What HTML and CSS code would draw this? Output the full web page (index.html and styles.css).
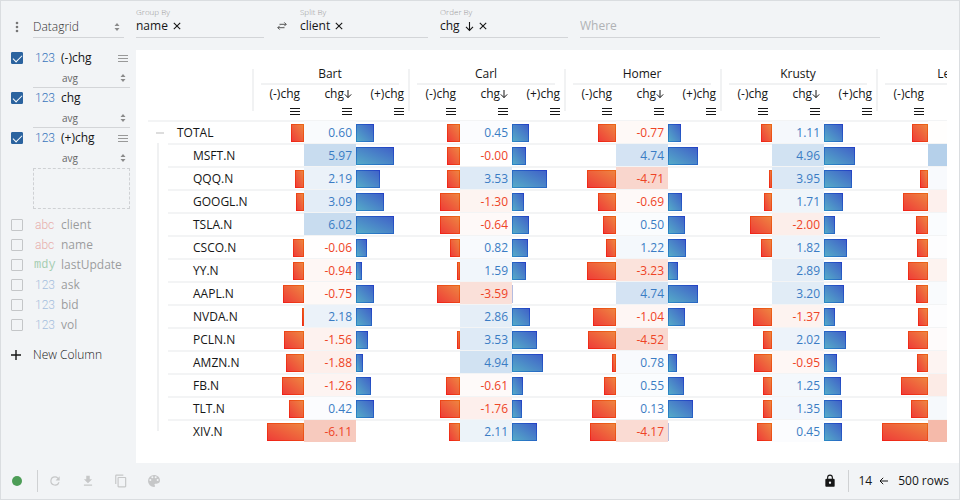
FILE: index.html
```html
<!DOCTYPE html>
<html lang="en">
<head>
<meta charset="utf-8">
<title>Datagrid</title>
<link rel="stylesheet" href="styles.css">
</head>
<body>
<svg class="defs" aria-hidden="true">
  <symbol id="updown" viewBox="0 0 6 10"><path d="M3 1 5.5 4h-5zM3 9 .5 6h5z"/></symbol>
  <symbol id="bars" viewBox="0 0 10 8"><path d="M0 1.5h10M0 4.5h10M0 7.5h10" stroke="currentColor" stroke-width="1"/></symbol>
  <symbol id="cross" viewBox="0 0 8 8"><path d="M.8.8l6.4 6.4M7.2.8.8 7.2" stroke="currentColor" stroke-width="1.1"/></symbol>
  <symbol id="down" viewBox="0 0 8 10"><path d="M4 1v7.6M.8 5.4 4 8.6l3.2-3.2" fill="none" stroke="currentColor" stroke-width="1"/></symbol>
</svg>
<div class="viewer">
  <header class="topbar">
    <div class="plugin">
      <button class="icon-button dots" aria-label="Menu"><svg width="4" height="12" viewBox="0 0 4 12"><circle cx="2" cy="2" r="1.3"/><circle cx="2" cy="6" r="1.3"/><circle cx="2" cy="10" r="1.3"/></svg></button>
      <div class="pick pick-plugin">
        <select aria-label="View type"><option>Datagrid</option></select>
        <svg width="6" height="10"><use href="#updown"/></svg>
      </div>
    </div>
    <div class="field"><span class="caption">Group By</span><div class="pill">name <button class="icon-button" aria-label="Remove name"><svg width="8" height="8"><use href="#cross"/></svg></button></div></div>
    <button class="icon-button swap" aria-label="Transpose"><svg width="10" height="8" viewBox="0 0 10 8" fill="none" stroke="currentColor"><path d="M2.5 2.3h6.7M7.3.4l1.9 1.9-1.9 1.9M7.5 5.7H.8M2.7 3.8.8 5.7l1.9 1.9"/></svg></button>
    <div class="field"><span class="caption">Split By</span><div class="pill">client <button class="icon-button" aria-label="Remove client"><svg width="8" height="8"><use href="#cross"/></svg></button></div></div>
    <div class="field"><span class="caption">Order By</span><div class="pill">chg <button class="icon-button" aria-label="Sort direction"><svg width="9" height="11"><use href="#down"/></svg></button> <button class="icon-button" aria-label="Remove chg"><svg width="8" height="8"><use href="#cross"/></svg></button></div></div>
    <input class="where" type="text" placeholder="Where" aria-label="Where">
  </header>

  <aside class="sidebar">
    <div class="active-column">
      <input type="checkbox" id="c-neg" checked><label for="c-neg"><span class="type number">123</span>(-)chg</label>
      <button class="icon-button drag" aria-label="Edit (-)chg"><svg width="10" height="8"><use href="#bars"/></svg></button>
      <div class="pick pick-agg"><select aria-label="(-)chg aggregate"><option>avg</option></select><svg width="6" height="10"><use href="#updown"/></svg></div>
    </div>
    <div class="active-column">
      <input type="checkbox" id="c-chg" checked><label for="c-chg"><span class="type number">123</span>chg</label>
      <div class="pick pick-agg"><select aria-label="chg aggregate"><option>avg</option></select><svg width="6" height="10"><use href="#updown"/></svg></div>
    </div>
    <div class="active-column">
      <input type="checkbox" id="c-pos" checked><label for="c-pos"><span class="type number">123</span>(+)chg</label>
      <button class="icon-button drag" aria-label="Edit (+)chg"><svg width="10" height="8"><use href="#bars"/></svg></button>
      <div class="pick pick-agg last"><select aria-label="(+)chg aggregate"><option>avg</option></select><svg width="6" height="10"><use href="#updown"/></svg></div>
    </div>
    <div class="dropzone"></div>
    <div class="inactive">
      <div class="column"><input type="checkbox" id="c-client"><label for="c-client"><span class="type string">abc</span>client</label></div>
      <div class="column"><input type="checkbox" id="c-name"><label for="c-name"><span class="type string">abc</span>name</label></div>
      <div class="column"><input type="checkbox" id="c-last"><label for="c-last"><span class="type date">mdy</span>lastUpdate</label></div>
      <div class="column"><input type="checkbox" id="c-ask"><label for="c-ask"><span class="type number">123</span>ask</label></div>
      <div class="column"><input type="checkbox" id="c-bid"><label for="c-bid"><span class="type number">123</span>bid</label></div>
      <div class="column"><input type="checkbox" id="c-vol"><label for="c-vol"><span class="type number">123</span>vol</label></div>
    </div>
    <button class="new-column"><svg width="10" height="10" viewBox="0 0 10 10"><path d="M5 0v10M0 5h10" stroke="currentColor" stroke-width="1.4"/></svg>New Column</button>
  </aside>

  <main class="panel">
    <div class="scroller">
      <table>
        <colgroup><col class="tree-col"><col span="15" class="value-col"></colgroup>
        <thead></thead>
        <tbody></tbody>
      </table>
    </div>
  </main>

  <footer class="status">
    <span class="light"></span>
    <span class="divider"></span>
    <button class="icon-button" aria-label="Reset"><svg width="14" height="14" viewBox="0 0 24 24"><path d="M17.65 6.35A7.96 7.96 0 0 0 12 4a8 8 0 1 0 7.73 10h-2.08A6 6 0 1 1 12 6c1.66 0 3.14.69 4.22 1.78L13 11h7V4z"/></svg></button>
    <button class="icon-button" aria-label="Export"><svg width="14" height="14" viewBox="0 0 24 24"><path d="M19 9h-4V3H9v6H5l7 7zM5 18v2h14v-2z"/></svg></button>
    <button class="icon-button" aria-label="Copy"><svg width="14" height="14" viewBox="0 0 24 24"><path d="M16 1H4a2 2 0 0 0-2 2v14h2V3h12zm3 4H8a2 2 0 0 0-2 2v14c0 1.1.9 2 2 2h11a2 2 0 0 0 2-2V7a2 2 0 0 0-2-2zm0 16H8V7h11z"/></svg></button>
    <button class="icon-button" aria-label="Theme"><svg width="16" height="16" viewBox="0 0 24 24"><path d="M12 3a9 9 0 0 0 0 18c.83 0 1.5-.67 1.5-1.5 0-.39-.15-.74-.39-1.01-.23-.26-.38-.61-.38-.99 0-.83.67-1.5 1.5-1.5H16a5 5 0 0 0 5-5c0-4.42-4.03-8-9-8zm-5.500 9a1.500 1.500 0 1 1 0-3 1.500 1.500 0 0 1 0 3zm3-4a1.500 1.500 0 1 1 0-3 1.500 1.500 0 0 1 0 3zm5 0a1.500 1.500 0 1 1 0-3 1.500 1.500 0 0 1 0 3zm3 4a1.500 1.500 0 1 1 0-3 1.500 1.500 0 0 1 0 3z"/></svg></button>
    <span class="spacer"></span>
    <button class="icon-button lock" aria-label="Lock"><svg width="14" height="14" viewBox="0 0 24 24"><path d="M18 8h-1V6A5 5 0 0 0 7 6v2H6a2 2 0 0 0-2 2v10c0 1.100.9 2 2 2h12a2 2 0 0 0 2-2V10a2 2 0 0 0-2-2zm-6 9a2 2 0 1 1 0-4 2 2 0 0 1 0 4zm3.100-9H8.900V6a3.100 3.100 0 0 1 6.200 0z"/></svg></button>
    <span class="divider"></span>
    <span class="count">14 <svg width="9" height="8" viewBox="0 0 9 8" fill="none" stroke="currentColor"><path fill="none" d="M9 4H1M4.200.8 1 4l3.200 3.200"/></svg> <span>500 rows</span></span>
  </footer>
</div>
<script src="script.js"></script>
</body>
</html>
```
FILE: styles.css
```css
* { box-sizing: border-box; }
body {
  margin: 0;
  font: 12px/20px "Open Sans", sans-serif;
  color: #161616;
}
button, input, select { font: inherit; color: inherit; }
.defs { position: absolute; width: 0; height: 0; }
svg { display: block; fill: currentColor; }
svg[fill="none"] { fill: none; }

.viewer {
  display: grid;
  grid-template: "top top" 49px "side panel" 1fr "status status" 36px / 135px minmax(0, 1fr);
  min-height: 100vh;
  border: 1px solid #dadde0;
  background: #f2f4f6;
}
.icon-button {
  display: inline-flex;
  align-items: center;
  justify-content: center;
  padding: 0;
  border: 0;
  background: none;
}

/* Query bar */
.topbar { grid-area: top; display: flex; align-items: flex-start; padding-right: 78px; }
.plugin { display: flex; width: 135px; padding: 16px 12px 0 10px; }
.dots { width: 12px; height: 20px; margin-right: 10px; color: #777; }
.pick { display: grid; align-items: center; border-bottom: 1px solid #d3d5d8; color: #666; }
.pick > * { grid-area: 1 / 1; }
.pick svg { justify-self: end; margin-right: 4px; color: #8a8a8a; pointer-events: none; }
.pick select {
  appearance: none;
  width: 100%;
  height: 20px;
  padding: 0;
  border: 0;
  background: none;
  font-weight: 300;
}
.pick-plugin { flex: 1; height: 21px; color: #333; }
.field { flex: 0 1 128px; margin-right: 12px; border-bottom: 1px solid #d3d5d8; }
.field:has(+ .swap) { margin-right: 0; }
.caption { display: block; padding-top: 5px; font-size: 8px; line-height: 11px; font-weight: 300; color: #999; }
.pill { display: flex; align-items: center; gap: 5px; height: 20px; padding-bottom: 2px; }
.swap { width: 36px; height: 49px; color: #555; }
.where {
  flex: 0 1 300px;
  min-width: 0;
  height: 37px;
  padding: 12px 0 0;
  border: 0;
  border-bottom: 1px solid #d3d5d8;
  background: none;
}
.where::placeholder { color: #b0b2b5; font-weight: 400; }

/* Column list */
.sidebar { grid-area: side; padding: 0 6px 0 10px; }
.active-column, .column { display: grid; grid-template-columns: 22px 1fr 14px; align-items: center; }
.active-column { grid-template-rows: 20px 20px; }
.active-column:first-child { margin-top: -2px; }
.column { height: 20px; }
.drag { color: #999; }
input[type="checkbox"] {
  appearance: none;
  display: grid;
  place-items: center;
  width: 12px;
  height: 12px;
  margin: 0;
  border: 1px solid #c4c6c8;
  border-radius: 1px;
}
input[type="checkbox"]:checked { border-color: #2b639f; background: #2b639f; }
input[type="checkbox"]:checked::before {
  content: "";
  width: 8px;
  height: 4px;
  margin-top: -2px;
  border: solid #fff;
  border-width: 0 0 1px 1px;
  rotate: -45deg;
}
label { display: flex; white-space: nowrap; }
.type { width: 28px; padding-left: 2px; font-family: Roboto, sans-serif; font-weight: 300; }
.number { color: #3a76bd; }
.string { color: #d9483b; }
.date { padding-left: 1px; font-family: "Liberation Mono", monospace; color: #3c9a55; }
.pick-agg { grid-column: 2 / 4; height: 20px; font-size: 10px; }
.pick-agg select { padding-left: 29px; font-weight: 400; }
.pick-agg.last { border-color: transparent; }
.dropzone { height: 41px; margin-left: 22px; border: 1px dashed #cfd1d4; }
.inactive { padding-top: 6px; }
.inactive label { color: #222; opacity: .42; }
.new-column {
  display: flex;
  align-items: center;
  gap: 12px;
  height: 20px;
  margin-top: 10px;
  padding: 0;
  border: 0;
  background: none;
  font-weight: 300;
}

/* Data grid */
.panel { grid-area: panel; min-width: 0; padding: 15px 12px 19px; background: #fff; }
.scroller { overflow: hidden; }
table { table-layout: fixed; width: 0; border-collapse: separate; border-spacing: 0; }
.tree-col { width: 104px; }
.value-col { width: 52px; }
th, td { padding: 0; font-weight: 400; }
.group {
  height: 20px;
  line-height: 17px;
  vertical-align: top;
  background:
    linear-gradient(#f1f2f3, #f1f2f3) 0 4px / 2px 100% no-repeat,
    linear-gradient(#f1f2f3, #f1f2f3) 9px 100% / calc(100% - 18px) 2px no-repeat;
}
.measure { height: 34px; padding: 1px 4px 0 0; line-height: 16px; vertical-align: top; }
.measure.first { background: linear-gradient(#f1f2f3, #f1f2f3) 0 0 / 2px 26px no-repeat; }
.measure div { display: flex; align-items: center; justify-content: flex-end; white-space: nowrap; }
.measure .icon-button { display: flex; height: 18px; margin-left: auto; }
tbody td, tbody th {
  height: 23px;
  line-height: 20px;
  background: linear-gradient(#f3f4f5, #f3f4f5) 0 0 / 100% 2px no-repeat;
}
tbody th { padding-top: 2px; text-align: left; white-space: nowrap; }
.total th { padding-left: 7px; }
.total .toggle { width: 10px; height: 20px; margin-right: 12px; vertical-align: top; color: #bbb; }
.leaf th {
  padding-left: 45px;
  background:
    linear-gradient(#f3f4f5, #f3f4f5) 20px 0 / 100% 2px no-repeat,
    linear-gradient(#f0f1f2, #f0f1f2) 9px 0 / 2px 100% no-repeat;
}
.leaf:last-child th {
  background:
    linear-gradient(#f3f4f5, #f3f4f5) 20px 0 / 100% 2px no-repeat,
    linear-gradient(#f0f1f2, #f0f1f2) 9px 0 / 2px 12px no-repeat;
}
tbody .value {
  padding: 1px 4px 0 0;
  border-top: 1px solid #f3f4f5;
  background: padding-box #fff;
  text-align: right;
}
.up { color: #3a7cc4; }
.down { color: #ee4426; }
.bar { display: block; height: 18px; margin-top: 2px; border: 1px solid transparent; }
.bar.minus {
  margin-left: auto;
  background:
    linear-gradient(to top right, #ee3e38, #ee8440) padding-box,
    linear-gradient(to top right, #f02018, #ea6a18) border-box;
}
.bar.plus {
  background:
    linear-gradient(to top right, #55aac8, #4062c8) padding-box,
    linear-gradient(to top right, #2c8cc4, #2440c4) border-box;
}
.bar.sliver { border: 0; background: #b4bce0; }

/* Status bar */
.status { grid-area: status; display: flex; align-items: center; padding: 0 10px; color: #c6c7c8; }
.status > .icon-button { width: 33px; }
.light { width: 10px; height: 10px; margin: 0 15px 0 1px; border-radius: 50%; background: #4d9d57; }
.divider { width: 1px; height: 22px; background: #cfd1d3; }
.spacer { flex: 1; }
.status > .lock { width: 24px; margin-right: 6px; color: #161616; }
.count { display: flex; align-items: center; gap: 7px; padding-left: 9px; color: #161616; white-space: nowrap; }
.count span { padding-left: 3px; }
```
FILE: script.js
```js
const groups = ["Bart", "Carl", "Homer", "Krusty", "Lenny"];

// Each cell group: [width of (-) bar, average, width of (+) bar].
const rows = [
  ["TOTAL",   [13, "0.60", 18],  [13, "0.45", 17],  [18, "-0.77", 13], [11, "1.11", 19],  [16, -0.2]],
  ["MSFT.N",  [0, "5.97", 38],   [13, "-0.00", 14], [0, "4.74", 30],   [0, "4.96", 31],   [0, 8]],
  ["QQQ.N",   [9, "2.19", 24],   [13, "3.53", 35],  [29, "-4.71", 0],  [3, "3.95", 28],   [8, 0.8]],
  ["GOOGL.N", [8, "3.09", 28],   [20, "-1.30", 12], [18, "-0.69", 14], [8, "1.71", 19],   [25, -1.7]],
  ["TSLA.N",  [0, "6.02", 38],   [20, "-0.64", 17], [13, "0.50", 17],  [22, "-2.00", 11], [12, 0.5]],
  ["CSCO.N",  [11, "-0.06", 11], [10, "0.82", 16],  [10, "1.22", 18],  [11, "1.82", 23],  [11, 0.3]],
  ["YY.N",    [11, "-0.94", 6],  [3, "1.59", 14],   [29, "-3.23", 10], [0, "2.89", 18],   [20, -1.4]],
  ["AAPL.N",  [21, "-0.75", 18], [23, "-3.59", 1],  [0, "4.74", 30],   [0, "3.20", 20],   [12, 0.7]],
  ["NVDA.N",  [2, "2.18", 16],   [0, "2.86", 18],   [23, "-1.04", 17], [19, "-1.37", 11], [10, 0.3]],
  ["PCLN.N",  [20, "-1.56", 12], [3, "3.53", 25],   [28, "-4.52", 0],  [9, "2.02", 22],   [20, -0.4]],
  ["AMZN.N",  [18, "-1.88", 7],  [0, "4.94", 31],   [4, "0.78", 9],    [18, "-0.95", 13], [11, -1.2]],
  ["FB.N",    [22, "-1.26", 15], [14, "-0.61", 11], [12, "0.55", 16],  [9, "1.25", 17],   [27, -2.4]],
  ["TLT.N",   [15, "0.42", 18],  [20, "-1.76", 10], [24, "0.13", 25],  [9, "1.35", 18],   [17, 1]],
  ["XIV.N",   [37, "-6.11", 0],  [11, "2.11", 25],  [26, "-4.17", 1],  [15, "0.45", 18],  [46, -8]],
];

const menu = '<button class="icon-button" aria-label="Column menu"><svg width="10" height="8"><use href="#bars"/></svg></button>';
const arrow = '<svg width="8" height="10"><use href="#down"/></svg>';
const bar = (kind, width) => width
  ? `<span class="bar ${kind}${width === 1 ? " sliver" : ""}" style="width:${width}px"></span>`
  : "";
const shade = (v) => v < 0 ? `rgb(228 75 35 / ${-v * 0.048})` : `rgb(51 125 196 / ${v * 0.045})`;

document.querySelector("thead").innerHTML =
  `<tr><th></th>${groups.map((g) => `<th class="group" colspan="3">${g}</th>`).join("")}</tr>` +
  `<tr><th></th>${groups.map(() =>
    `<th class="measure first"><div>(-)chg</div>${menu}</th>` +
    `<th class="measure"><div>chg${arrow}</div>${menu}</th>` +
    `<th class="measure"><div>(+)chg</div>${menu}</th>`).join("")}</tr>`;

const toggle = '<button class="icon-button toggle" aria-label="Collapse"><svg width="8" height="2" viewBox="0 0 8 2"><path d="M0 .5h8v1H0z"/></svg></button>';

document.querySelector("tbody").innerHTML = rows.map(([name, ...cells], i) =>
  `<tr class="${i ? "leaf" : "total"}"><th>${i ? "" : toggle}${name}</th>` +
  cells.map(([minus, value, plus]) => {
    const text = typeof value === "string" ? value : "";
    const tone = String(value).startsWith("-") ? "down" : "up";
    return `<td>${bar("minus", minus)}</td>` +
      `<td class="value ${tone}" style="background-color:${shade(Number(value))}">${text}</td>` +
      `<td>${bar("plus", plus)}</td>`;
  }).join("") + "</tr>").join("");
```
